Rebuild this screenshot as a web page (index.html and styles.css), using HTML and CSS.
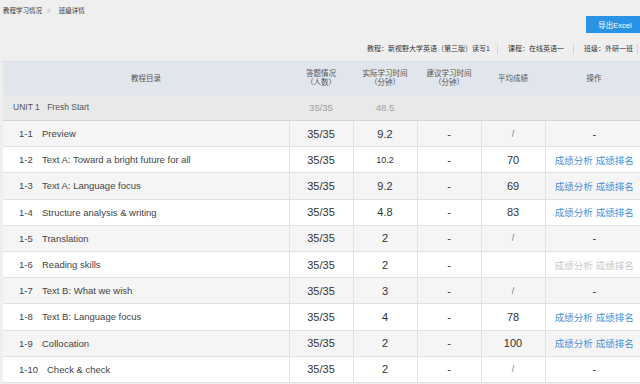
FILE: index.html
```html
<!DOCTYPE html>
<html lang="zh-CN">

<head>
    <meta charset="UTF-8">
    <meta name="viewport" content="width=device-width, initial-scale=1.0">
    <title>班级详情</title>
    <link rel="stylesheet" href="styles.css">
</head>

<body>
    <div class="page">
        <div class="crumbs">
            <span>教程学习情况</span>
            <span class="sep">&gt;</span>
            <span>班级详情</span>
        </div>

        <div class="toolbar">
            <button class="btn-export">导出Excel</button>
        </div>

        <div class="info">
            <span class="info-item">教程：新视野大学英语（第三版）读写1</span>
            <span class="info-item">课程：在线英语一</span>
            <span class="info-item">班级：外研一班</span>
        </div>

        <table class="grid">
            <colgroup>
                <col class="c-name">
                <col class="c-num">
                <col class="c-num">
                <col class="c-num">
                <col class="c-num">
                <col class="c-op">
            </colgroup>
            <thead>
                <tr>
                    <th>教程目录</th>
                    <th>答题情况<br>（人数）</th>
                    <th>实际学习时间<br>（分钟）</th>
                    <th>建议学习时间<br>（分钟）</th>
                    <th>平均成绩</th>
                    <th>操作</th>
                </tr>
            </thead>
            <tbody>
                <tr class="unit">
                    <td class="name">UNIT 1 <span class="gap">Fresh Start</span></td>
                    <td>35/35</td>
                    <td>48.5</td>
                    <td></td>
                    <td></td>
                    <td></td>
                </tr>
                <tr>
                    <td class="name sub"><span class="no">1-1</span>Preview</td>
                    <td>35/35</td>
                    <td>9.2</td>
                    <td>-</td>
                    <td class="slash">/</td>
                    <td>-</td>
                </tr>
                <tr>
                    <td class="name sub"><span class="no">1-2</span>Text A: Toward a bright future for all</td>
                    <td>35/35</td>
                    <td class="small">10.2</td>
                    <td>-</td>
                    <td>70</td>
                    <td class="ops"><a href="#">成绩分析</a> <a href="#">成绩排名</a></td>
                </tr>
                <tr>
                    <td class="name sub"><span class="no">1-3</span>Text A: Language focus</td>
                    <td>35/35</td>
                    <td>9.2</td>
                    <td>-</td>
                    <td>69</td>
                    <td class="ops"><a href="#">成绩分析</a> <a href="#">成绩排名</a></td>
                </tr>
                <tr>
                    <td class="name sub"><span class="no">1-4</span>Structure analysis &amp; writing</td>
                    <td>35/35</td>
                    <td>4.8</td>
                    <td>-</td>
                    <td>83</td>
                    <td class="ops"><a href="#">成绩分析</a> <a href="#">成绩排名</a></td>
                </tr>
                <tr>
                    <td class="name sub"><span class="no">1-5</span>Translation</td>
                    <td>35/35</td>
                    <td>2</td>
                    <td>-</td>
                    <td class="slash">/</td>
                    <td>-</td>
                </tr>
                <tr>
                    <td class="name sub"><span class="no">1-6</span>Reading skills</td>
                    <td>35/35</td>
                    <td>2</td>
                    <td>-</td>
                    <td></td>
                    <td class="ops off"><a href="#">成绩分析</a> <a href="#">成绩排名</a></td>
                </tr>
                <tr>
                    <td class="name sub"><span class="no">1-7</span>Text B: What we wish</td>
                    <td>35/35</td>
                    <td>3</td>
                    <td>-</td>
                    <td class="slash">/</td>
                    <td>-</td>
                </tr>
                <tr>
                    <td class="name sub"><span class="no">1-8</span>Text B: Language focus</td>
                    <td>35/35</td>
                    <td>4</td>
                    <td>-</td>
                    <td>78</td>
                    <td class="ops"><a href="#">成绩分析</a> <a href="#">成绩排名</a></td>
                </tr>
                <tr>
                    <td class="name sub"><span class="no">1-9</span>Collocation</td>
                    <td>35/35</td>
                    <td>2</td>
                    <td>-</td>
                    <td>100</td>
                    <td class="ops"><a href="#">成绩分析</a> <a href="#">成绩排名</a></td>
                </tr>
                <tr>
                    <td class="name sub"><span class="no wide">1-10</span>Check &amp; check</td>
                    <td>35/35</td>
                    <td>2</td>
                    <td>-</td>
                    <td class="slash">/</td>
                    <td>-</td>
                </tr>
            </tbody>
        </table>
    </div>
</body>

</html>
```

FILE: styles.css
```css
/* Reset CSS */
* {
    margin: 0;
    padding: 0;
    box-sizing: border-box;
}

body {
    font-family: 'Liberation Sans', 'Noto Sans CJK SC', sans-serif;
    background-color: #efefef;
    color: #333;
    overflow: hidden;
}

.page {
    display: flex;
    flex-direction: column;
    width: 640px;
}

.crumbs {
    display: flex;
    gap: 5px;
    padding: 6px 0 0 3px;
    font-size: 6.5px;
    line-height: 10px;
    color: #333;
}

.crumbs .sep {
    color: #aaa;
    margin-right: 3px;
}

.toolbar {
    display: flex;
    justify-content: flex-end;
}

.btn-export {
    width: 58px;
    height: 17px;
    border: none;
    background-color: #2b93e6;
    color: white;
    font-family: inherit;
    font-size: 7.5px;
    margin-right: -4px;
}

.info {
    display: flex;
    justify-content: flex-end;
    align-items: flex-start;
    height: 28px;
    padding-top: 11px;
    font-size: 7px;
    color: #333;
    padding-right: 2px;
}

.info-item {
    padding: 0 9px 0 10px;
    border-right: 1px solid #d4d4d4;
    line-height: 10px;
}

.info-item:first-child {
    padding-right: 7px;
}

.info-item:last-child {
    padding-right: 4px;
}

.grid {
    margin-left: 3px;
    width: 640px;
    border-collapse: collapse;
    table-layout: fixed;
    background-color: white;
}

.c-name {
    width: 286px;
}

.c-num {
    width: 64px;
}

.c-op {
    width: 98px;
}

.grid th {
    height: 33px;
    background-color: #e1e5ec;
    color: #555;
    font-weight: normal;
    font-size: 7.5px;
    line-height: 9.5px;
    text-align: center;
    vertical-align: middle;
    border-top: 1px solid #dadee6;
}

.grid td {
    height: 26.2px;
    text-align: center;
    vertical-align: middle;
    font-size: 11px;
    border-bottom: 1px solid #e2e2e2;
    border-left: 1px solid #e2e2e2;
    color: #333;
}

.grid td.name {
    text-align: left;
    border-left: none;
    font-size: 9.5px;
    color: #444;
}

.grid .sub {
    padding-left: 16px;
}

.grid .no {
    display: inline-block;
    width: 23px;
}

.grid .no.wide {
    width: 28px;
}

.grid tbody tr:nth-child(even) td {
    background-color: #f5f5f5;
}

.grid tr.unit td {
    height: 26px;
    background-color: #e9e9e9;
    color: #a0a0a0;
    font-size: 9.5px;
    border-left: none;
    border-bottom: 1px solid #d6d6d6;
}

.grid tr.unit td.name {
    padding-left: 10px;
    font-size: 8.5px;
    color: #555;
}

.unit .gap {
    margin-left: 5px;
}

.grid td.small {
    font-size: 9px;
}

.grid td.slash {
    color: #777;
    font-size: 9px;
}

.ops a {
    color: #4a90d9;
    text-decoration: none;
    font-size: 9.5px;
}

.ops.off a {
    color: #c8c8c8;
}
```
